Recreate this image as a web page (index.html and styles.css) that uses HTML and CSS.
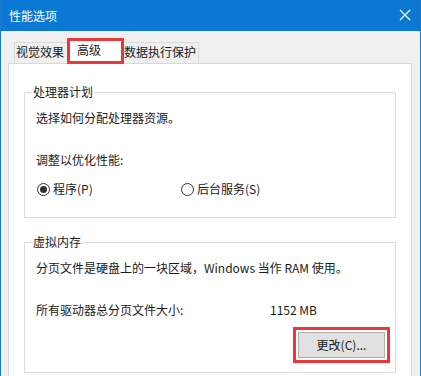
FILE: index.html
```html
<!DOCTYPE html>
<html lang="zh-CN">
<head>
<meta charset="utf-8">
<title>性能选项</title>
<link rel="stylesheet" href="styles.css">
</head>
<body>
<div class="window">
  <div class="titlebar">
    <span class="title">性能选项</span>
    <svg class="close" width="12" height="12" viewBox="0 0 12 12"><path d="M1 1 L11 11 M11 1 L1 11" stroke="#fff" stroke-width="1.2" fill="none"/></svg>
  </div>
  <div class="content">
    <div class="tabs">
      <div class="tab t1">视觉效果</div>
      <div class="tab selected">高级</div>
      <div class="tab t3">数据执行保护</div>
    </div>
    <div class="panel">
      <fieldset class="group g1">
        <legend>处理器计划</legend>
        <div class="line l1">选择如何分配处理器资源。</div>
        <div class="line l2">调整以优化性能:</div>
        <div class="radios">
          <label class="radio r1"><span class="circle checked"></span>程序(P)</label>
          <label class="radio r2"><span class="circle"></span>后台服务(S)</label>
        </div>
      </fieldset>
      <fieldset class="group g2">
        <legend>虚拟内存</legend>
        <div class="line l1">分页文件是硬盘上的一块区域，Windows 当作 RAM 使用。</div>
        <div class="line l2 sizerow"><span class="sizelabel">所有驱动器总分页文件大小:</span><span>1152 MB</span></div>
        <div class="btnrow">
          <div class="highlight"><div class="button">更改(C)...</div></div>
        </div>
      </fieldset>
    </div>
  </div>
</div>
</body>
</html>
```
FILE: styles.css
```css
* { box-sizing: border-box; }
html, body { margin: 0; padding: 0; }
body {
  width: 421px;
  height: 376px;
  overflow: hidden;
  background: #f0f0f0;
  font-family: "Noto Sans CJK SC", "Noto Sans", sans-serif;
  font-size: 12px;
  line-height: 16px;
  color: #1a1a1a;
}
.window {
  width: 421px;
  height: 376px;
  border-left: 1px solid #1979ca;
  border-right: 1px solid #1979ca;
  background: #f0f0f0;
  display: flex;
  flex-direction: column;
}
.titlebar {
  height: 31px;
  background: #0b78d4;
  display: flex;
  align-items: center;
  justify-content: space-between;
  padding: 0 9px 0 8px;
  flex: none;
}
.title { color: #fff; font-size: 12px; }
.close { display: block; margin-top: -1px; }
.content {
  padding: 7px 8px 0 7px;
  flex: 1;
  display: flex;
  flex-direction: column;
}
.tabs {
  display: flex;
  align-items: flex-end;
  height: 25px;
  padding-left: 6px;
  position: relative;
  z-index: 1;
}
.tab {
  height: 21px;
  border: 1px solid #d9d9d9;
  border-bottom: none;
  background: #f0f0f0;
  padding: 1px 0 0 1px;
  white-space: nowrap;
}
.t1 { width: 53px; border-right: none; }
.t3 { width: 75px; padding-left: 0; border-left: none; }
.selected {
  width: 57px;
  height: 26px;
  margin-bottom: -1px;
  background: #fff;
  border: 3px solid #e7383c;
  padding: 1px 0 0 7px;
}
.panel {
  flex: 1;
  background: #fff;
  border: 1px solid #d9d9d9;
  border-bottom: none;
  padding: 20px 15px 0 15px;
}
.group {
  margin: 0;
  padding: 0 0 0 11px;
  border: 1px solid #dcdcdc;
  min-width: 0;
}
.group legend {
  margin-left: -4px;
  padding: 0 1px;
  line-height: 16px;
}
.g1 { height: 134px; }
.g2 { margin-top: 16px; height: 139px; }
.line { white-space: nowrap; }
.l1 { margin-top: 10px; }
.l2 { margin-top: 26px; }
.radios {
  display: flex;
  margin-top: 13px;
}
.radio {
  display: flex;
  align-items: center;
  white-space: nowrap;
}
.r1 { width: 144px; margin-left: 1px; }
.circle {
  width: 13px;
  height: 13px;
  border: 1px solid #333;
  border-radius: 50%;
  margin-right: 3px;
  display: flex;
  align-items: center;
  justify-content: center;
  background: #fff;
}
.circle.checked::after {
  content: "";
  width: 7px;
  height: 7px;
  border-radius: 50%;
  background: #333;
}
.sizerow { display: flex; }
.sizelabel { width: 234px; }
.btnrow {
  display: flex;
  justify-content: flex-end;
  margin-top: 9px;
  padding-right: 5px;
}
.highlight {
  border: 3px solid #e7383c;
  padding: 2px;
}
.button {
  width: 87px;
  height: 26px;
  background: #e1e1e1;
  border: 1px solid #adadad;
  display: flex;
  align-items: center;
  justify-content: center;
  color: #1a1a1a;
}
```
